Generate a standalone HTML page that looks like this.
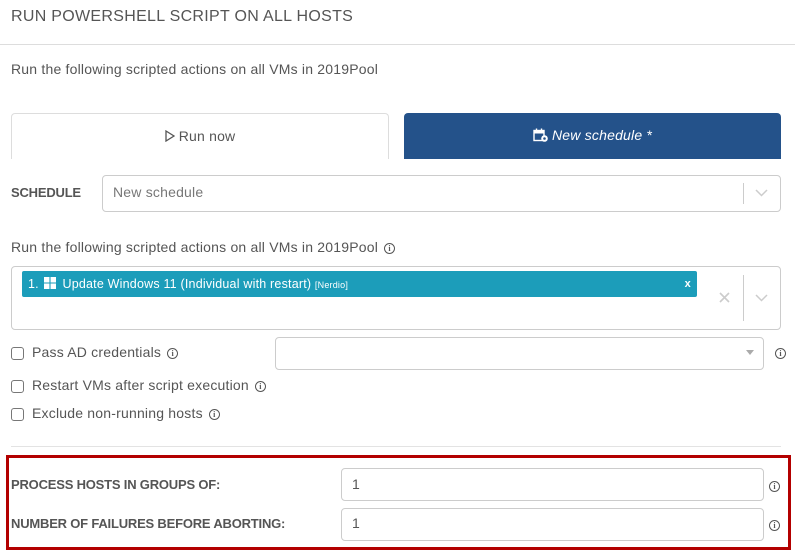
<!DOCTYPE html>
<html><head><meta charset="utf-8"><style>
*{box-sizing:border-box;margin:0;padding:0}
body{width:795px;height:560px;background:#fff;font-family:"Liberation Sans",sans-serif;color:#555;font-size:14px;letter-spacing:0.2px;position:relative;overflow:hidden}
.a{position:absolute;white-space:nowrap}
.box{position:absolute;border:1px solid #ccc;border-radius:4px;background:#fff}
.cb{position:absolute;width:13px;height:13px;border:1px solid #777;border-radius:3px}
.info{display:inline-block;width:11px;height:11px;border:1px solid #555;border-radius:50%;font-size:8px;line-height:9px;text-align:center;font-weight:bold;vertical-align:1px;margin-left:6px;font-family:"Liberation Serif",serif;letter-spacing:0}
.lbl{font-weight:bold;font-size:13px;color:#555;letter-spacing:-0.2px}
</style></head><body>
<div class="a" style="left:11px;top:8px;font-size:16px;color:#555;letter-spacing:0.3px">RUN POWERSHELL SCRIPT ON ALL HOSTS</div>
<div class="a" style="left:0;top:44px;width:795px;height:1px;background:#ddd"></div>
<div class="a" style="left:11px;top:61px">Run the following scripted actions on all VMs in 2019Pool</div>

<div class="a" style="left:11px;top:113px;width:378px;height:46px;border:1px solid #ddd;border-bottom:none;border-radius:4px 4px 0 0;text-align:center;line-height:44px;font-size:14px"><svg width="10" height="12" viewBox="0 0 10 12" style="vertical-align:-1px"><path d="M1 1L9 6L1 11Z" fill="none" stroke="#555" stroke-width="1.3"/></svg> Run now</div>
<div class="a" style="left:404px;top:113px;width:377px;height:46px;background:#24528a;border-radius:4px 4px 0 0;text-align:center;line-height:44px;color:#fff;font-size:14px;font-style:italic"><svg width="15" height="14" viewBox="0 0 15 14" style="vertical-align:-2px"><rect x="1" y="2.5" width="10" height="10" fill="none" stroke="#fff" stroke-width="1.4"/><rect x="1" y="2.5" width="10" height="3" fill="#fff"/><path d="M3.5 0.5v3M8.5 0.5v3" stroke="#fff" stroke-width="1.4"/><circle cx="11.5" cy="10.5" r="3.3" fill="#fff"/><circle cx="11.5" cy="10.5" r="1.3" fill="#24528a"/></svg> New schedule *</div>

<div class="a lbl" style="left:11px;top:185px">SCHEDULE</div>
<div class="box" style="left:102px;top:175px;width:679px;height:37px"></div>
<div class="a" style="left:113px;top:184px;color:#777">New schedule</div>
<div class="a" style="left:743px;top:183px;width:1px;height:21px;background:#ccc"></div>
<svg class="a" style="left:755px;top:189px" width="13" height="8"><path d="M1 1l5.5 5.5L12 1" fill="none" stroke="#ccc" stroke-width="1.5"/></svg>

<div class="a" style="left:11px;top:239px">Run the following scripted actions on all VMs in 2019Pool<span class="info">i</span></div>
<div class="box" style="left:11px;top:266px;width:770px;height:64px"></div>
<div class="a" style="left:22px;top:271px;width:675px;height:26px;background:#1c9dba;border-radius:2px;color:#fff;font-size:12.5px;letter-spacing:0.2px;line-height:26px;padding-left:6px">1. <svg width="12" height="12" viewBox="0 0 11 11" style="vertical-align:-1px;margin:0 7px 0 1px"><path d="M0 0h5v5H0zM6 0h5v5H6zM0 6h5v5H0zM6 6h5v5H6z" fill="#fff"/></svg>Update Windows 11 (Individual with restart) <span style="font-size:9px">[Nerdio]</span><span style="position:absolute;right:6px;top:0;font-weight:bold;font-size:11px">x</span></div>
<svg class="a" style="left:719px;top:292px" width="11" height="11"><path d="M1 1l9 9M10 1l-9 9" stroke="#ccc" stroke-width="1.6"/></svg>
<div class="a" style="left:743px;top:275px;width:1px;height:46px;background:#ccc"></div>
<svg class="a" style="left:755px;top:294px" width="13" height="8"><path d="M1 1l5.5 5.5L12 1" fill="none" stroke="#ccc" stroke-width="1.5"/></svg>

<div class="cb" style="left:11px;top:347px"></div>
<div class="a" style="left:32px;top:344px">Pass AD credentials<span class="info">i</span></div>
<div class="box" style="left:275px;top:337px;width:489px;height:33px"></div>
<svg class="a" style="left:746px;top:350px" width="8" height="5"><path d="M0 0h8L4 5z" fill="#aaa"/></svg>
<div class="a" style="left:769px;top:344px"><span class="info">i</span></div>

<div class="cb" style="left:11px;top:380px"></div>
<div class="a" style="left:32px;top:377px">Restart VMs after script execution<span class="info">i</span></div>
<div class="cb" style="left:11px;top:408px"></div>
<div class="a" style="left:32px;top:405px">Exclude non-running hosts<span class="info">i</span></div>

<div class="a" style="left:11px;top:446px;width:770px;height:1px;background:#e3e3e3"></div>

<div class="a" style="left:6px;top:455px;width:785px;height:95px;border:3px solid #b30000"></div>
<div class="a lbl" style="left:11px;top:477px">PROCESS HOSTS IN GROUPS OF:</div>
<div class="box" style="left:341px;top:468px;width:423px;height:33px"></div>
<div class="a" style="left:352px;top:476px">1</div>
<div class="a" style="left:763px;top:477px"><span class="info">i</span></div>
<div class="a lbl" style="left:11px;top:516px">NUMBER OF FAILURES BEFORE ABORTING:</div>
<div class="box" style="left:341px;top:508px;width:423px;height:33px"></div>
<div class="a" style="left:352px;top:515px">1</div>
<div class="a" style="left:763px;top:516px"><span class="info">i</span></div>
</body></html>
